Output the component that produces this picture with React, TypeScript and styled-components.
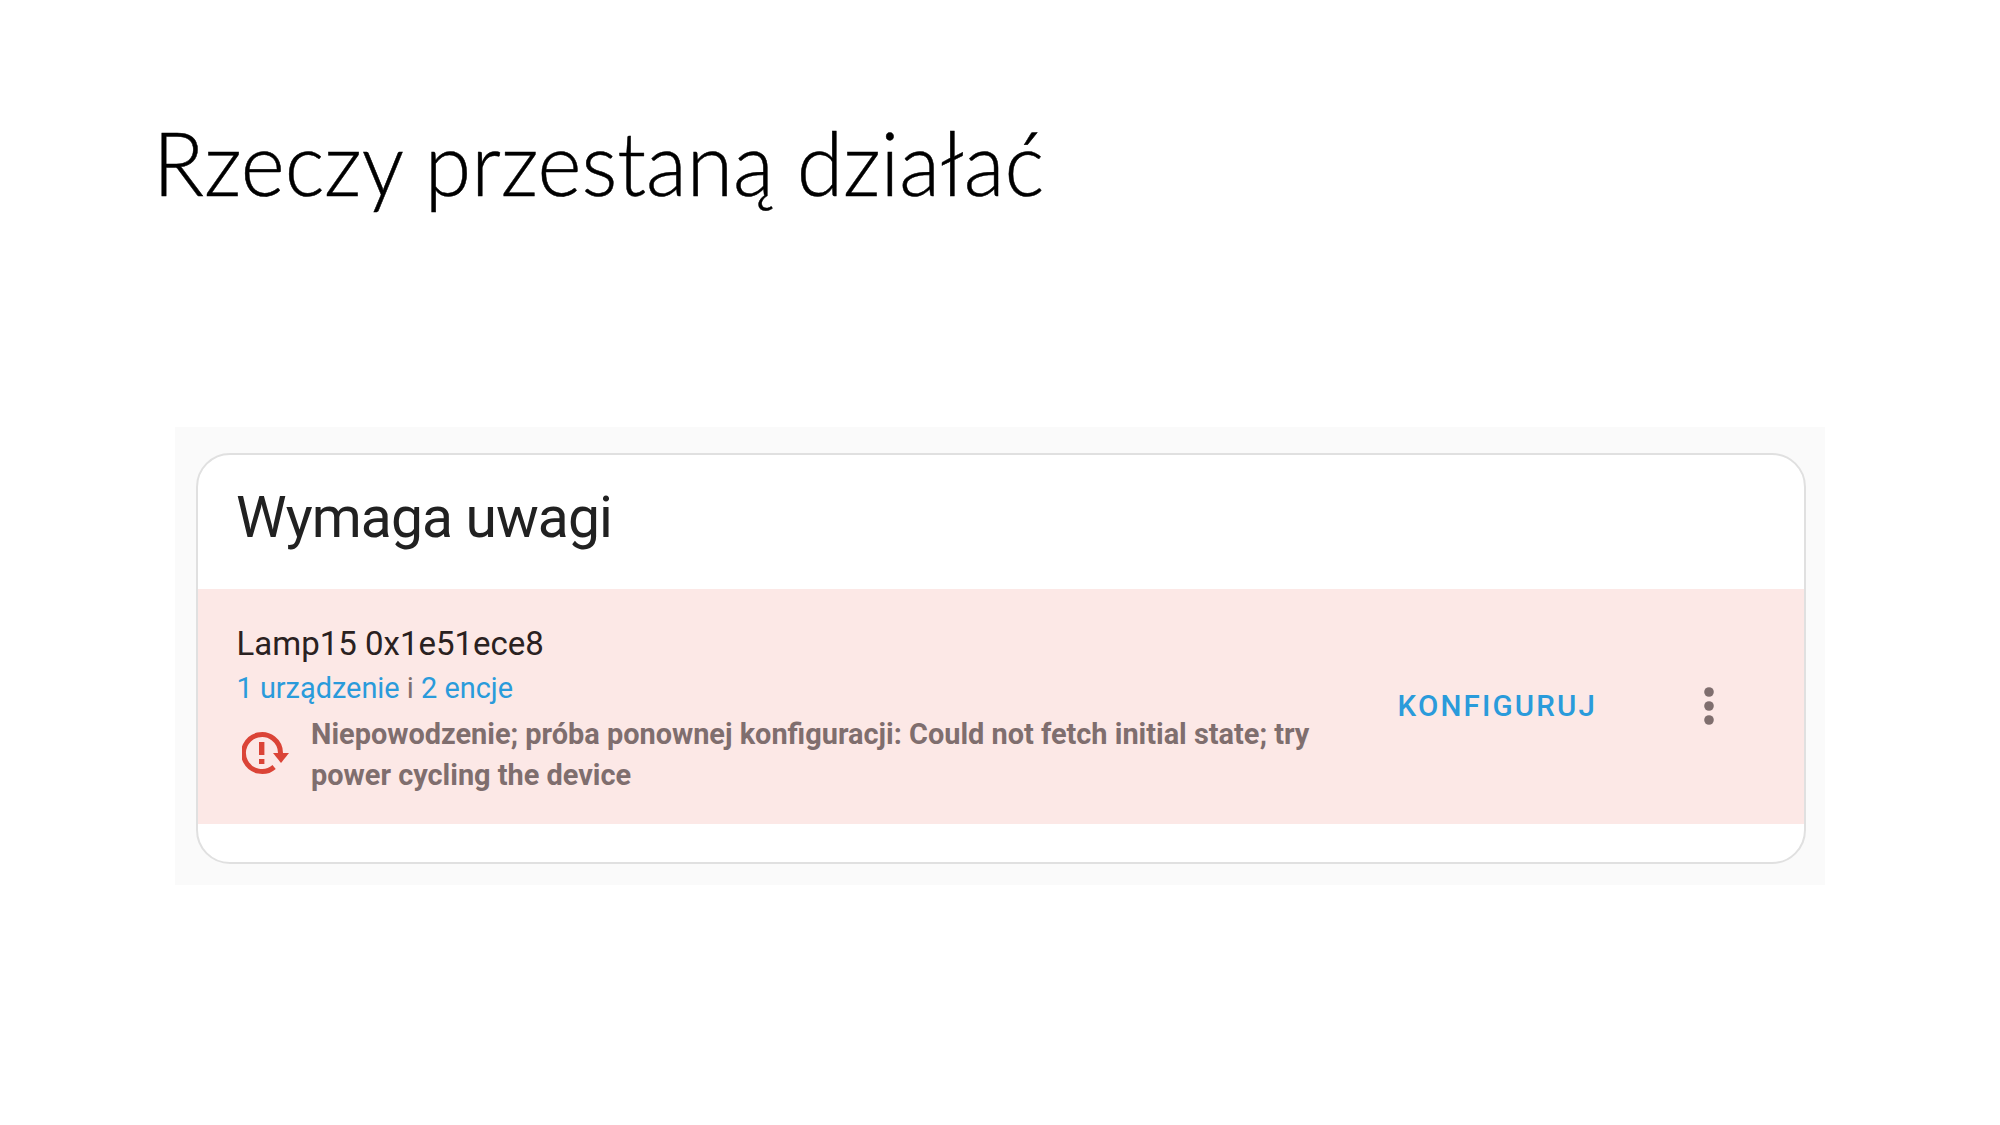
import React from 'react';
import styled, { createGlobalStyle } from 'styled-components';

const GlobalStyle = createGlobalStyle`
  html, body {
    margin: 0;
    padding: 0;
    background: #ffffff;
    font-family: Roboto, "Liberation Sans", sans-serif;
  }
`;

const Slide = styled.div`
  width: 2000px;
  height: 1125px;
  overflow: hidden;
  background: #ffffff;
`;

const Title = styled.h1`
  margin: 0;
  padding: 107px 0 0 160px;
  height: 427px;
  box-sizing: border-box;
  font-family: Lato, "Noto Sans", sans-serif;
  font-weight: 300;
  font-size: 88px;
  line-height: 110px;
  color: #000000;
  white-space: nowrap;
  -webkit-text-stroke: 0.5px #000000;
  transform: scaleX(0.957);
  transform-origin: left top;
`;

const Panel = styled.div`
  margin-left: 175px;
  width: 1650px;
  height: 458px;
  padding: 26px 19px 0 21px;
  box-sizing: border-box;
  background: #fafafa;
`;

const Card = styled.div`
  height: 411px;
  box-sizing: border-box;
  background: #ffffff;
  border: 2.5px solid #e0e0e0;
  border-radius: 34px;
  overflow: hidden;
`;

const CardTitle = styled.h2`
  margin: 0;
  height: 133.5px;
  padding: 30px 0 0 38px;
  box-sizing: border-box;
  font-weight: 400;
  font-size: 57px;
  line-height: 66px;
  letter-spacing: -0.9px;
  color: #212121;
`;

const ErrorRow = styled.div`
  display: flex;
  align-items: center;
  height: 235px;
  padding-left: 38.5px;
  background: #fce8e6;
`;

const Info = styled.div`
  width: 1161px;
  flex: none;
  margin-top: 6px;
`;

const DeviceName = styled.div`
  font-size: 33px;
  line-height: 44px;
  color: #2a2121;
`;

const Links = styled.div`
  font-size: 28.9px;
  line-height: 45px;
  color: #7f6e6e;
`;

const Accent = styled.span`
  color: #2a9bdb;
`;

const Status = styled.div`
  display: flex;
  align-items: center;
  gap: 19px;
  margin-top: 3px;
`;

const StatusIcon = styled.svg`
  flex: none;
  display: block;
  margin: -4px 0 0 5.5px;
`;

const StatusText = styled.div`
  font-size: 28.9px;
  font-weight: 700;
  line-height: 41px;
  color: #7f6e6e;
  width: 1040px;
`;

const ConfigureButton = styled.div`
  width: 305px;
  flex: none;
  margin-top: -1px;
  font-size: 29.5px;
  font-weight: 500;
  letter-spacing: 2.2px;
  color: #2a9bdb;
`;

const Menu = styled.svg`
  flex: none;
  display: block;
  margin-top: -1px;
`;

const App = () => {
  return (
    <Slide>
      <GlobalStyle />
      <Title>Rzeczy przestaną działać</Title>
      <Panel>
        <Card>
          <CardTitle>Wymaga uwagi</CardTitle>
          <ErrorRow>
            <Info>
              <DeviceName>Lamp15 0x1e51ece8</DeviceName>
              <Links>
                <Accent>1 urządzenie</Accent> i <Accent>2 encje</Accent>
              </Links>
              <Status>
                <StatusIcon width="50" height="50" viewBox="0 0 50 50" fill="none">
                  <path
                    d="M32.1 39A18.5 18.5 0 1 1 38.5 25"
                    stroke="#db4437"
                    strokeWidth="5"
                  />
                  <path d="M31 25H47L39 35Z" fill="#db4437" />
                  <rect x="17" y="14" width="5.4" height="13" fill="#db4437" />
                  <rect x="17" y="31" width="5.4" height="5" fill="#db4437" />
                </StatusIcon>
                <StatusText>
                  Niepowodzenie; próba ponownej konfiguracji: Could not fetch initial state; try power
                  cycling the device
                </StatusText>
              </Status>
            </Info>
            <ConfigureButton>KONFIGURUJ</ConfigureButton>
            <Menu width="12" height="40" viewBox="0 0 12 40" fill="#7f6e6e">
              <circle cx="6" cy="6" r="4.8" />
              <circle cx="6" cy="20" r="4.8" />
              <circle cx="6" cy="34" r="4.8" />
            </Menu>
          </ErrorRow>
        </Card>
      </Panel>
    </Slide>
  );
};

export default App;
